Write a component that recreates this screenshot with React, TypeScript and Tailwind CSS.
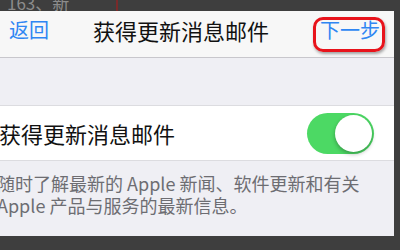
const cjk = "font-['Noto_Sans_CJK_SC','Noto_Sans',sans-serif]";

function Toggle() {
  return (
    <div className="flex h-[41px] w-[67px] items-center justify-end rounded-full bg-[#4cd964] p-[2px]">
      <div className="h-[37px] w-[37px] rounded-full bg-white shadow-[0_2px_4px_rgba(0,0,0,0.3)]" />
    </div>
  );
}

export default function App() {
  return (
    <div className={`h-[250px] w-[400px] overflow-hidden bg-[#3e3e3e] ${cjk}`}>
      <div className="relative h-[11px] overflow-hidden">
        <div className="-mt-[7px] ml-[7px] text-[17px] leading-[20px] text-[#8c8c8c]">163、新</div>
        <div className="absolute left-[116px] top-0 h-[11px] w-[2px] bg-[#7a2a2a]" />
      </div>

      <div className="flex h-[225px] w-[394px] flex-col overflow-hidden bg-[#efeff4]">
        <div className="relative flex h-[47px] shrink-0 items-center border-b border-[#c8c7cc] bg-[#f7f7f7] pb-[8px]">
          <span className="ml-[9px] text-[20px] leading-[24px] text-[#2f86f3]">返回</span>
          <span className="ml-[44px] text-[22px] leading-[24px] text-[#111]">获得更新消息邮件</span>
          <span className="ml-auto mr-[14px] text-[20px] leading-[24px] text-[#2f86f3]">下一步</span>
          <div className="absolute left-[313px] top-[6px] h-[35px] w-[72px] rounded-[10px] border-[3px] border-[#e8131b] shadow-[1px_2px_3px_rgba(0,0,0,0.35)]" />
        </div>

        <div className="h-[47px] shrink-0" />

        <div className="flex h-[56px] shrink-0 items-center justify-between border-y border-[#dcdce0] bg-white pr-[20px]">
          <span className="-ml-[1px] text-[22px] leading-[26px] text-[#111]">获得更新消息邮件</span>
          <Toggle />
        </div>

        <div className="-ml-[3px] pt-[11px] text-[18px] leading-[22px] text-[#6d6d72]">
          随时了解最新的 Apple 新闻、软件更新和有关
          <br />
          Apple 产品与服务的最新信息。
        </div>
      </div>
    </div>
  );
}
